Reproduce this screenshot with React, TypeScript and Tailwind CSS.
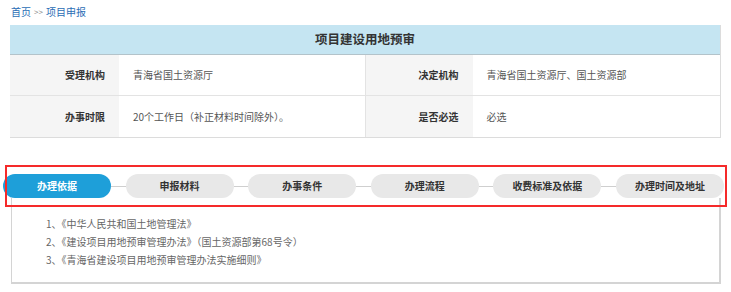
const tabs = ["办理依据", "申报材料", "办事条件", "办理流程", "收费标准及依据", "办理时间及地址"];

const basis = [
  "1、《中华人民共和国土地管理法》",
  "2、《建设项目用地预审管理办法》（国土资源部第68号令）",
  "3、《青海省建设项目用地预审管理办法实施细则》",
];

function Row({ items, last }: { items: [string, string][]; last?: boolean }) {
  return (
    <div className={`flex h-[41px] ${last ? "" : "border-b border-[#e3e3e3]"}`}>
      {items.map(([label, value], i) => (
        <div key={label} className={`flex flex-1 ${i === 0 ? "border-r border-[#e3e3e3]" : ""}`}>
          <div className={`flex items-center justify-end pr-[14px] bg-[#f5f5f5] font-bold text-[#333] ${i === 0 ? "w-[109px]" : "w-[107px]"}`}>
            {label}
          </div>
          <div className="flex flex-1 items-center pl-[14px] text-[#555]">{value}</div>
        </div>
      ))}
    </div>
  );
}

export default function App() {
  const active = 0;
  return (
    <div className="relative w-[731px] h-[292px] bg-white text-[10px] leading-none font-['Noto_Sans_CJK_SC','Noto_Sans',sans-serif] overflow-hidden">
      <div className="flex items-center h-[25px] pl-[11px] pb-[1px] text-[#2a6db5]">
        <span>首页</span>
        <span className="mx-[3px] text-[#888] text-[8px]">&gt;&gt;</span>
        <span>项目申报</span>
      </div>

      <div className="ml-[10px] w-[711px] border-r border-b border-[#dcdcdc]">
        <div className="flex items-center justify-center h-[30px] bg-[#c5e5f2] border-b border-[#b3c3ca] text-[12.5px] font-bold text-[#333]">
          项目建设用地预审
        </div>
        <Row items={[["受理机构", "青海省国土资源厅"], ["决定机构", "青海省国土资源厅、国土资源部"]]} />
        <Row last items={[["办事时限", "20个工作日（补正材料时间除外）。"], ["是否必选", "必选"]]} />
      </div>

      <div className="mt-[36px] ml-[3px] w-[721px] flex items-center">
        {tabs.map((t, i) => (
          <div key={t} className={`flex items-center ${i < tabs.length - 1 ? "flex-1" : ""}`}>
            <div
              className={`flex items-center justify-center w-[108px] h-[24px] rounded-full font-bold ${
                i === active ? "bg-[#1e9fd9] text-white" : "bg-[#e8e8e8] text-[#333]"
              }`}
            >
              {t}
            </div>
            {i < tabs.length - 1 && <div className="flex-1 h-px bg-[#cfcfcf]" />}
          </div>
        ))}
      </div>

      <div className="ml-[11px] w-[710px] h-[86px] border-l border-r-2 border-b-2 border-[#d4d4d4] pt-[21px] pl-[34px] text-[#666]">
        {basis.map(b => (
          <div key={b} className="h-[18px]">{b}</div>
        ))}
      </div>

      <div className="absolute left-[5px] top-[165px] w-[722px] h-[42px] border-2 border-[#f52a2a] pointer-events-none" />
    </div>
  );
}
